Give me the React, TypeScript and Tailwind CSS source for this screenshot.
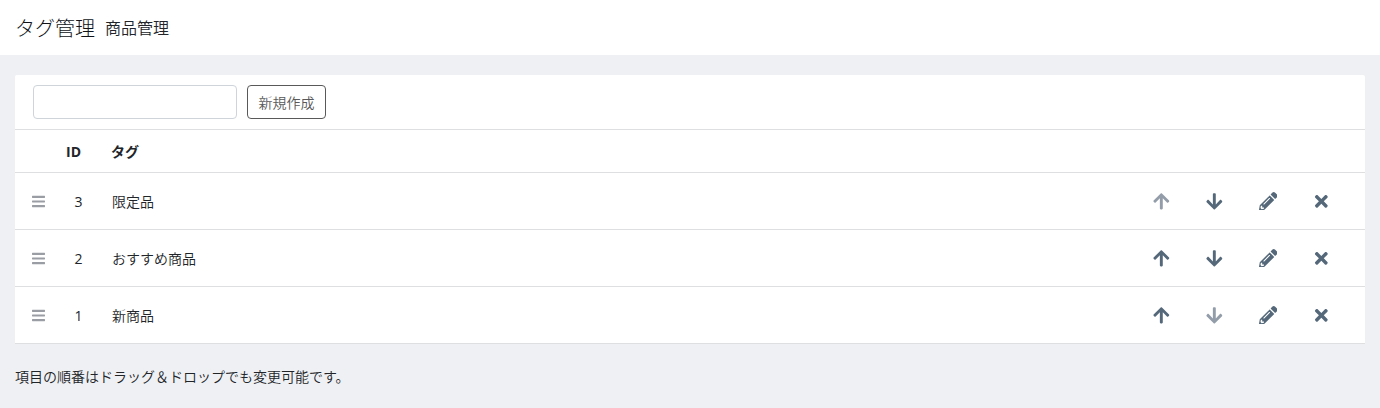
import { FaArrowDown, FaArrowUp, FaBars, FaPencilAlt, FaTimes } from "react-icons/fa";
import type { IconType } from "react-icons";

interface Tag {
  id: number;
  name: string;
}

const tags: Tag[] = [
  { id: 3, name: "限定品" },
  { id: 2, name: "おすすめ商品" },
  { id: 1, name: "新商品" },
];

interface ActionButtonProps {
  icon: IconType;
  label: string;
  disabled?: boolean;
}

function ActionButton({ icon: Icon, label, disabled = false }: ActionButtonProps) {
  return (
    <button
      type="button"
      aria-label={label}
      disabled={disabled}
      className="flex items-center justify-center text-[#54687a] disabled:text-[#939daa]"
    >
      <Icon className="text-[18.67px]" />
    </button>
  );
}

interface TagRowProps {
  tag: Tag;
  isFirst: boolean;
  isLast: boolean;
}

function TagRow({ tag, isFirst, isLast }: TagRowProps) {
  return (
    <li className="flex h-[57px] items-center border-b border-[#dddfe1] pr-[17px] pl-[17px]">
      <FaBars className="w-[13px] text-[15px] text-[#9a9ea4]" />
      <span className="ml-[23px] w-[21px] pt-0.5 text-center">{tag.id}</span>
      <span className="ml-[23px] flex-1 pt-0.5 font-[350]">{tag.name}</span>
      <div className="grid w-[213.4px] grid-cols-4">
        <ActionButton icon={FaArrowUp} label="上へ" disabled={isFirst} />
        <ActionButton icon={FaArrowDown} label="下へ" disabled={isLast} />
        <ActionButton icon={FaPencilAlt} label="編集" />
        <ActionButton icon={FaTimes} label="削除" />
      </div>
    </li>
  );
}

export default function App() {
  return (
    <div className="h-screen overflow-hidden bg-[#eff0f3] font-['Open_Sans','Noto_Sans_CJK_JP',sans-serif] text-sm text-[#212529]">
      <header className="flex h-[55px] items-center bg-white px-[15px]">
        <h1 className="pt-0.5 text-xl font-light text-[#0f1317]">タグ管理</h1>
        <span className="ml-2.5 text-base font-[350]">商品管理</span>
      </header>

      <main className="px-[15px] pt-5">
        <div className="rounded-t-xs bg-white">
          <div className="flex h-[55px] gap-2.5 border-b border-[#dddfe1] px-[18px] py-2.5">
            <input
              type="text"
              className="h-[34px] w-[204px] rounded border border-[#ced4da] bg-white px-3"
            />
            <button
              type="button"
              className="h-[34px] w-[79px] rounded border border-[#595959] pt-0.5 font-[350] text-[#595959]"
            >
              新規作成
            </button>
          </div>

          <div className="flex h-[43px] items-center border-b border-[#dddfe1] pt-0.5 font-bold">
            <span className="ml-[51px] w-[45px]">ID</span>
            <span>タグ</span>
          </div>

          <ul>
            {tags.map((tag, index) => (
              <TagRow
                key={tag.id}
                tag={tag}
                isFirst={index === 0}
                isLast={index === tags.length - 1}
              />
            ))}
          </ul>
        </div>

        <p className="mt-[23px] font-[350]">
          項目の順番はドラッグ＆ドロップでも変更可能です。
        </p>
      </main>
    </div>
  );
}
